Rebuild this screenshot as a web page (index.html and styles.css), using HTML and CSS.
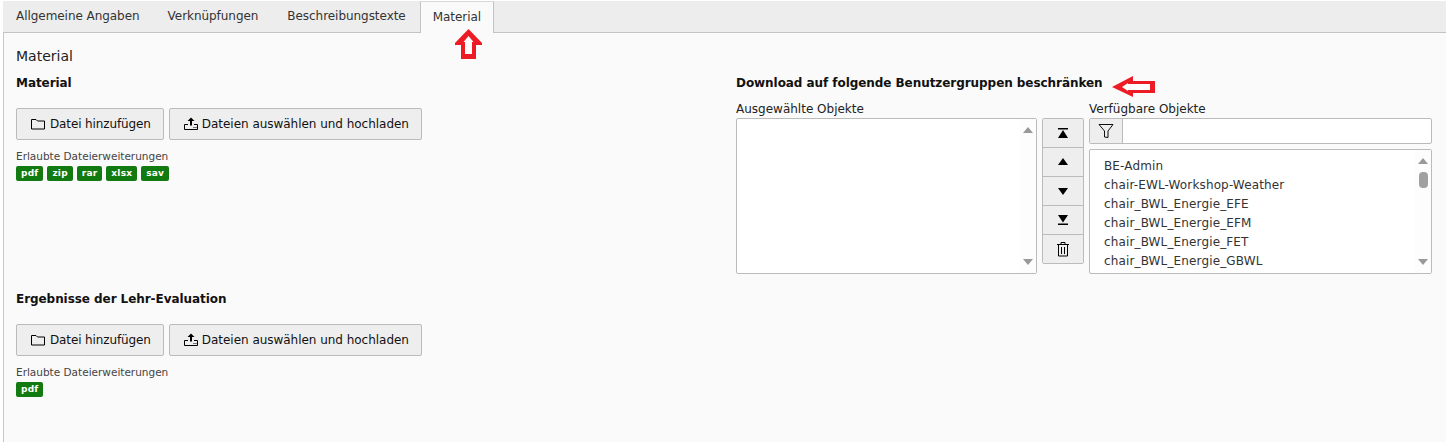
FILE: index.html
```html
<!DOCTYPE html>
<html lang="de">
<head>
<meta charset="utf-8">
<title>Material</title>
<link rel="stylesheet" href="styles.css">
</head>
<body>
<svg width="0" height="0" class="defs">
  <symbol id="i-folder" viewBox="0 0 16 16"><path d="M1.500 3.500h4.500l1.500 1.500h7v8h-13z" fill="none" stroke="#000" stroke-width="1"/></symbol>
  <symbol id="i-upload" viewBox="0 0 16 16"><path d="M8 1.500l3.500 3.500H9v4.500H7V5H4.500z" fill="#000"/><path d="M5 8.500H1.500v5h13v-5H11" fill="none" stroke="#000"/><path d="M10.500 11h1v1h-1zM12.500 11h1v1h-1z" fill="#000"/></symbol>
  <symbol id="i-filter" viewBox="0 0 16 16"><path d="M1 1.500h14L10 8v6.500L6.500 14V8z" fill="none" stroke="#111" stroke-width="1"/></symbol>
  <symbol id="i-trash" viewBox="0 0 16 16"><path d="M3.500 4v11h9V4M2 3.500h12M6 3V1.500h4V3M6.500 6v7M9.500 6v7" fill="none" stroke="#000"/></symbol>
  <symbol id="i-top" viewBox="0 0 16 16"><path d="M3 3h10v1.500H3zM8 5l5 8H3z" fill="#000"/></symbol>
  <symbol id="i-up" viewBox="0 0 16 16"><path d="M8 4l5 7H3z" fill="#000"/></symbol>
  <symbol id="i-down" viewBox="0 0 16 16"><path d="M8 12L3 5h10z" fill="#000"/></symbol>
  <symbol id="i-bottom" viewBox="0 0 16 16"><path d="M3 11.500h10V13H3zM8 10.500L3 3h10z" fill="#000"/></symbol>
</svg>

<nav class="tabs">
  <a class="tab">Allgemeine Angaben</a>
  <a class="tab">Verknüpfungen</a>
  <a class="tab">Beschreibungstexte</a>
  <a class="tab tab-active">Material</a>
</nav>

<main class="panel">
  <h2 class="title">Material</h2>
  <div class="columns">
    <div class="col-left">
      <section class="files">
        <h3 class="label">Material</h3>
        <div class="btn-row">
          <button class="btn btn-add"><svg class="icon"><use href="#i-folder"/></svg>Datei hinzufügen</button>
          <button class="btn btn-up"><svg class="icon"><use href="#i-upload"/></svg>Dateien auswählen und hochladen</button>
        </div>
        <p class="hint">Erlaubte Dateierweiterungen</p>
        <div class="badges"><span class="badge">pdf</span><span class="badge">zip</span><span class="badge">rar</span><span class="badge">xlsx</span><span class="badge">sav</span></div>
      </section>
      <section class="files files-second">
        <h3 class="label">Ergebnisse der Lehr-Evaluation</h3>
        <div class="btn-row">
          <button class="btn btn-add"><svg class="icon"><use href="#i-folder"/></svg>Datei hinzufügen</button>
          <button class="btn btn-up"><svg class="icon"><use href="#i-upload"/></svg>Dateien auswählen und hochladen</button>
        </div>
        <p class="hint">Erlaubte Dateierweiterungen</p>
        <div class="badges"><span class="badge">pdf</span></div>
      </section>
    </div>

    <div class="col-right">
      <h3 class="label label-right">Download auf folgende Benutzergruppen beschränken</h3>
      <div class="picker">
        <div class="pick-selected">
          <div class="pick-label">Ausgewählte Objekte</div>
          <div class="listbox listbox-tall">
            <div class="list-body"></div>
            <div class="scroll"><span class="tri tri-up"></span><span class="tri tri-down"></span></div>
          </div>
        </div>
        <div class="pick-actions">
          <button class="act"><svg class="icon-s"><use href="#i-top"/></svg></button>
          <button class="act"><svg class="icon-s"><use href="#i-up"/></svg></button>
          <button class="act"><svg class="icon-s"><use href="#i-down"/></svg></button>
          <button class="act"><svg class="icon-s"><use href="#i-bottom"/></svg></button>
          <button class="act"><svg class="icon-s"><use href="#i-trash"/></svg></button>
        </div>
        <div class="pick-available">
          <div class="pick-label">Verfügbare Objekte</div>
          <div class="filter">
            <span class="filter-btn"><svg class="icon-f"><use href="#i-filter"/></svg></span>
            <span class="filter-input"></span>
          </div>
          <div class="listbox listbox-short">
            <ul class="list-body items">
              <li>BE-Admin</li>
              <li>chair-EWL-Workshop-Weather</li>
              <li>chair_BWL_Energie_EFE</li>
              <li>chair_BWL_Energie_EFM</li>
              <li>chair_BWL_Energie_FET</li>
              <li>chair_BWL_Energie_GBWL</li>
            </ul>
            <div class="scroll"><span class="tri tri-up"></span><span class="thumb"></span><span class="tri tri-down"></span></div>
          </div>
        </div>
      </div>
    </div>
  </div>
</main>

<svg class="arrow arrow-up" width="32" height="34" viewBox="0 0 32 34"><path d="M15.500 1L29 15V17H23V31H8V17H2V15z" fill="#ed1c24"/><path d="M15.500 8L20.500 14H19V26H12V14H10.500z" fill="#fff"/></svg>
<svg class="arrow arrow-left" width="48" height="26" viewBox="0 0 48 26"><path d="M3 13L24 2V7H46V19H24V23z" fill="#ed1c24"/><path d="M13 13L19 9V10H41V16H19V17z" fill="#fff"/></svg>
</body>
</html>
```

FILE: styles.css
```css
* { box-sizing: border-box; }
html, body { margin: 0; padding: 0; }
body {
  position: relative;
  width: 1446px;
  height: 442px;
  overflow: hidden;
  background: #fff;
  font-family: "DejaVu Sans", Verdana, sans-serif;
  font-size: 12px;
  color: #000;
  padding-top: 1px;
}
.defs { position: absolute; }

.tabs {
  display: flex;
  height: 32px;
  margin-left: 3px;
  background: #ededed;
  border-bottom: 1px solid #c3c3c3;
}
.tab {
  height: 31px;
  padding: 0 13px;
  line-height: 31px;
  letter-spacing: -0.05px;
  color: #333;
  white-space: nowrap;
}
.tab:nth-child(2) { padding: 0 15px; }
.tab:nth-child(3) { padding: 0 13px 0 14px; }
.tab-active {
  height: 32px;
  margin-left: 1px;
  padding: 0 12px;
  background: #fafafa;
  border: 1px solid #c3c3c3;
  border-bottom: 0;
  border-top-color: #d8d8d8;
}

.panel {
  height: 409px;
  margin: 0 0 0 3px;
  padding: 13px 13px 0 12px;
  background: #fafafa;
  border-left: 1px solid #c8c8c8;
}
.title {
  margin: 0;
  height: 20px;
  font-size: 14px;
  font-weight: 400;
  line-height: 20px;
  color: #222;
}
.columns { display: flex; }
.col-left { width: 720px; flex: none; }
.col-right { width: 696px; flex: none; }

.label {
  margin: 0;
  font-size: 12px;
  font-weight: 700;
  line-height: 16px;
  letter-spacing: -0.06px;
  color: #111;
}
.files { padding-top: 9px; height: 216px; }
.files-second { height: auto; padding-top: 9px; }
.btn-row { display: flex; gap: 5px; margin-top: 17px; }
.btn {
  display: flex;
  align-items: center;
  height: 32px;
  padding: 0 12px 0 13px;
  background: #eee;
  border: 1px solid #bbb;
  border-radius: 2px;
  font: inherit;
  color: #111;
  white-space: nowrap;
}
.btn-add { letter-spacing: -0.12px; }
.btn-up { letter-spacing: -0.03px; }
.icon { width: 16px; height: 16px; margin-right: 4px; flex: none; }
.btn-up .icon { margin-right: 3px; }
.hint {
  margin: 9px 0 0;
  font-size: 10.500px;
  line-height: 14px;
  color: #444;
}
.badges { display: flex; gap: 4px; margin-top: 3px; }
.badge {
  height: 15px;
  padding: 0 5px;
  background: #117a11;
  border-radius: 2px;
  color: #fff;
  font-size: 9px;
  font-weight: 700;
  line-height: 14px;
  letter-spacing: 0.2px;
}

.label-right { padding-top: 9px; }
.picker { display: flex; gap: 5px; margin-top: 11px; }
.pick-label { height: 13px; line-height: 14px; color: #222; }
.pick-selected { width: 301px; flex: none; }
.pick-available { width: 343px; flex: none; }
.listbox {
  display: flex;
  background: #fff;
  border: 1px solid #bbb;
  border-radius: 2px;
}
.listbox-tall { height: 156px; margin-top: 3px; }
.listbox-short { height: 125px; margin-top: 5px; }
.list-body { flex: 1; margin: 0; padding: 7px 0 0 14px; list-style: none; }
.items li { height: 19px; line-height: 19px; letter-spacing: 0.14px; color: #333; white-space: nowrap; }
.scroll {
  width: 16px;
  flex: none;
  display: flex;
  flex-direction: column;
  align-items: center;
  background: #fdfdfd;
  padding: 8px 0;
}
.tri { width: 0; height: 0; flex: none; border-left: 5px solid transparent; border-right: 5px solid transparent; }
.tri-up { border-bottom: 6px solid #999; }
.tri-down { border-top: 6px solid #999; margin-top: auto; }
.thumb { width: 9px; height: 16px; margin-top: 8px; background: #a0a0a0; border-radius: 4px; }

.pick-actions {
  width: 42px;
  height: 146px;
  flex: none;
  margin-top: 16px;
  display: flex;
  flex-direction: column;
  border: 1px solid #bbb;
  border-radius: 2px;
  background: #eee;
}
.act {
  height: 29px;
  flex: none;
  display: flex;
  align-items: center;
  justify-content: center;
  padding: 0;
  background: #eee;
  border: 0;
  border-bottom: 1px solid #bbb;
}
.act:last-child { border-bottom: 0; height: 28px; }
.icon-s { width: 16px; height: 16px; }

.filter {
  display: flex;
  height: 26px;
  margin-top: 3px;
  background: #fff;
  border: 1px solid #bbb;
  border-radius: 2px;
}
.filter-btn {
  width: 33px;
  display: flex;
  align-items: center;
  justify-content: center;
  background: #eee;
  border-right: 1px solid #bbb;
}
.icon-f { width: 16px; height: 16px; }
.filter-input { flex: 1; }

.arrow { position: absolute; }
.arrow-up { left: 453px; top: 28px; }
.arrow-left { left: 1109px; top: 74px; }
```
